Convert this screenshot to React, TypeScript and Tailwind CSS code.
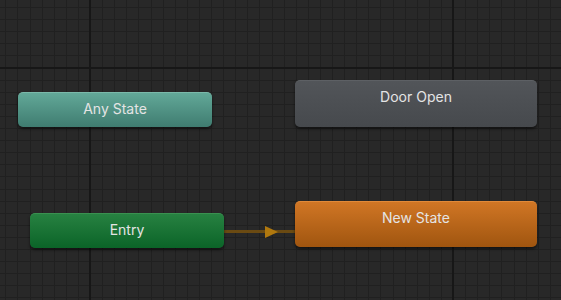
import React from 'react';

// Graph canvas grid (minor every ~12.1px, major every 30 minors)
const W = 561;
const H = 300;
const STEP = 12.1;

const minorX = Array.from({ length: 48 }, (_, i) => Math.round(5.3 + i * STEP)).filter(x => x < W);
const minorY = Array.from({ length: 26 }, (_, i) => Math.round(7 + i * STEP)).filter(y => y < H);

const GridBackdrop = () => (
    <svg className="absolute inset-0" width={W} height={H}>
        <rect width={W} height={H} fill="#282828" />
        {minorX.map(x => (
            <rect key={`vx${x}`} x={x} y={0} width={1} height={H} fill="#202020" />
        ))}
        {minorY.map(y => (
            <rect key={`hy${y}`} x={0} y={y} width={W} height={1} fill="#202020" />
        ))}
        <rect x={89} y={0} width={2} height={H} fill="#171717" />
        <rect x={452} y={0} width={2} height={H} fill="#171717" />
        <rect x={0} y={67} width={W} height={2} fill="#171717" />
    </svg>
);

interface StateNodeProps {
    label: string;
    className: string;
    textClass?: string;
}

const StateNode: React.FC<StateNodeProps> = ({ label, className, textClass = 'items-center pb-[4px]' }) => (
    <div
        className={`absolute flex justify-center rounded-[5px] text-[14px] text-[#e4e4e4] shadow-[0_2px_3px_rgba(0,0,0,0.55)] ${textClass} ${className}`}
        style={{ fontFamily: 'Inter, "Noto Sans", sans-serif' }}
    >
        {label}
    </div>
);

export default function App() {
    return (
        <div className="relative w-[561px] h-[300px] overflow-hidden bg-[#282828]">
            <GridBackdrop />

            {/* Transition Entry -> New State */}
            <svg className="absolute left-[222px] top-[224px]" width={76} height={16}>
                <rect x={0} y={6} width={76} height={3} fill="#6a4a12" />
                <polygon points="43,2 56,8 43,14" fill="#b0780e" />
            </svg>

            <StateNode
                label="Any State"
                className="left-[18px] top-[92px] w-[194px] h-[35px] border-t border-[#7bb9aa] bg-[linear-gradient(to_bottom,#62a898,#3f7c70)]"
            />
            <StateNode
                label="Door Open"
                textClass="items-start pt-[5px]"
                className="left-[295px] top-[80px] w-[242px] h-[47px] border-t border-[#5d6064] bg-[linear-gradient(to_bottom,#525559,#46494d)]"
            />
            <StateNode
                label="Entry"
                className="left-[30px] top-[213px] w-[194px] h-[35px] border-t border-[#3a9050] bg-[linear-gradient(to_bottom,#278141,#0b6428)]"
            />
            <StateNode
                label="New State"
                textClass="items-start pt-[5px]"
                className="left-[295px] top-[201px] w-[242px] h-[46px] border-t border-[#e08a3a] bg-[linear-gradient(to_bottom,#d07625,#a0550f)]"
            />
        </div>
    );
}
